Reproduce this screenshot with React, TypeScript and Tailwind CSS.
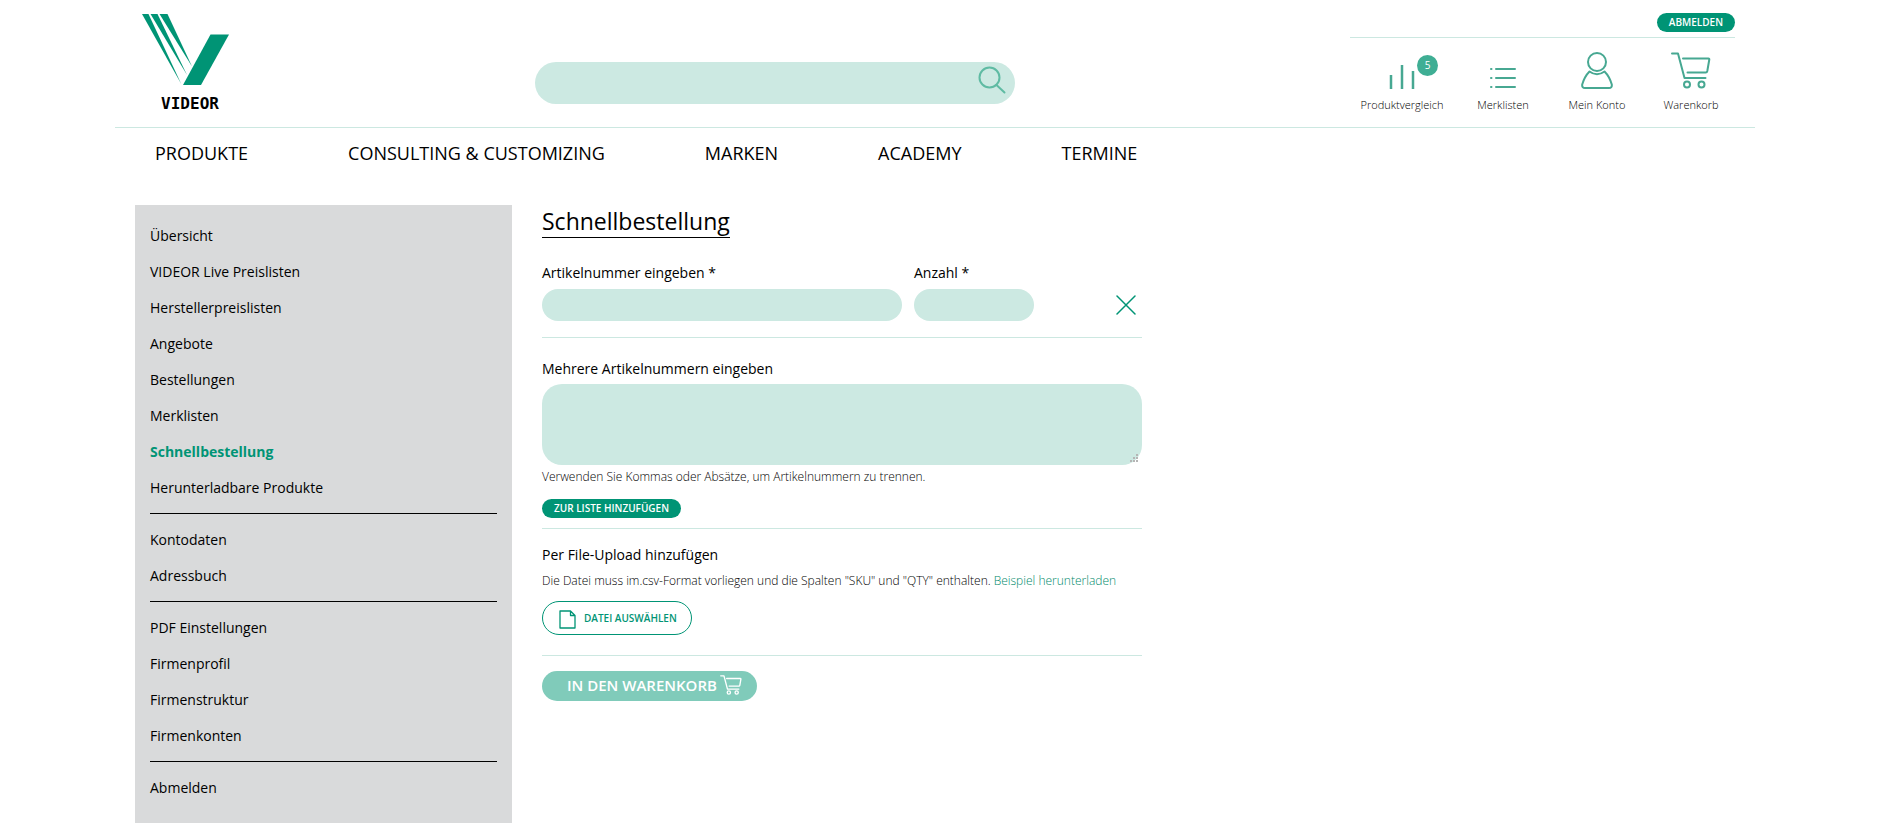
import React from 'react';

const navItems = ['PRODUKTE', 'CONSULTING & CUSTOMIZING', 'MARKEN', 'ACADEMY', 'TERMINE'];

const accountGroups = [
  [
    'Übersicht',
    'VIDEOR Live Preislisten',
    'Herstellerpreislisten',
    'Angebote',
    'Bestellungen',
    'Merklisten',
    'Schnellbestellung',
    'Herunterladbare Produkte',
  ],
  ['Kontodaten', 'Adressbuch'],
  ['PDF Einstellungen', 'Firmenprofil', 'Firmenstruktur', 'Firmenkonten'],
  ['Abmelden'],
];

function Logo() {
  return (
    <a href="#" aria-label="VIDEOR" className="flex flex-col items-center">
      <svg width="88" height="72" viewBox="0 0 88 72" fill="#009475">
        <path d="M0 0h6.500L39.500 70.500z" />
        <path d="M8.500 0h7L45 61z" />
        <path d="M17.500 0h8L50 52.500z" />
        <path d="M68.500 20.500H87L59 71H41z" />
      </svg>
      <span className="mt-2 pl-2 font-['DejaVu_Sans_Mono',monospace] text-base font-bold leading-5 text-black">VIDEOR</span>
    </a>
  );
}

function CartIcon({ className }: { className: string }) {
  return (
    <svg className={className} viewBox="0 0 40 37" fill="none" stroke="currentColor" strokeLinecap="round" strokeLinejoin="round">
      <path d="M1 1.500h6l6.500 24.500h21" />
      <path d="M12 6.500h25.500q1 0 .8 1l-2 11.500q-.3 1.500-1.500 1.500H16.500" />
      <circle cx="16" cy="32.500" r="3" />
      <circle cx="30.500" cy="32.500" r="3" />
    </svg>
  );
}

function CompareIcon() {
  return (
    <svg width="26" height="24" viewBox="0 0 26 24" fill="none" stroke="currentColor" strokeWidth="2.500">
      <path d="M2 10v14M13 0v24M24 6v18" />
    </svg>
  );
}

function ListIcon() {
  return (
    <svg width="26" height="21" viewBox="0 0 26 21" fill="none" stroke="currentColor" strokeWidth="2" strokeLinecap="round">
      <path d="M6 1h19M6 10h19M6 19h19M1 1h.5M1 10h.5M1 19h.5" />
    </svg>
  );
}

function UserIcon() {
  return (
    <svg width="32" height="37" viewBox="0 0 32 37" fill="none" stroke="currentColor" strokeWidth="2" strokeLinejoin="round">
      <circle cx="16" cy="10" r="9" />
      <path d="M8.500 19.500C5 23 2.500 28 1.200 32.500Q.8 36 4 36h24q3.200 0 2.800-3.500C29.500 28 27 23 23.500 19.500Q16 25 8.500 19.500z" />
    </svg>
  );
}

const shopLinks = [
  { name: 'Produktvergleich', icon: <CompareIcon />, badge: 5 },
  { name: 'Merklisten', icon: <ListIcon /> },
  { name: 'Mein Konto', icon: <UserIcon /> },
  { name: 'Warenkorb', icon: <CartIcon className="h-[37px] w-[40px] stroke-2" /> },
];

function Header() {
  return (
    <header className="flex h-32 items-start border-b border-[#cce8e1] px-5">
      <div className="w-[400px] shrink-0 pl-[7px] pt-[14px]">
        <div className="w-fit">
          <Logo />
        </div>
      </div>
      <form className="relative mt-[62px] w-[480px]">
        <input type="search" aria-label="Suche" className="block h-[42px] w-full rounded-full bg-[#cce9e2] pl-5 pr-12 outline-none" />
        <button type="button" aria-label="Suchen" className="absolute right-[9px] top-[4px] text-[#5fbba3]">
          <svg width="28" height="28" viewBox="0 0 28 28" fill="none" stroke="currentColor" strokeWidth="2" strokeLinecap="round">
            <circle cx="11.500" cy="11.500" r="10" />
            <path d="M18.500 19l8 7.500" />
          </svg>
        </button>
      </form>
      <div className="ml-auto w-[385px]">
        <div className="flex justify-end border-b border-[#cce8e1] pb-[5px] pt-[13px]">
          <button type="button" className="h-[19px] rounded-full bg-[#009475] px-3 pb-0.5 text-[10px] font-semibold leading-none text-white">
            ABMELDEN
          </button>
        </div>
        <div className="flex gap-3 pl-1">
          {shopLinks.map((link) => (
            <a key={link.name} href="#" className="flex h-[75px] w-[82px] flex-col items-center justify-end first:w-[96px]">
              <span className="relative text-[#47a892]">
                {link.icon}
                {link.badge && (
                  <span className="absolute -top-[10px] left-[28px] flex size-[21px] items-center justify-center rounded-full bg-[#3fae94] text-[10px] text-white">
                    {link.badge}
                  </span>
                )}
              </span>
              <span className="mt-2 text-[11px] font-light leading-4 text-black">{link.name}</span>
            </a>
          ))}
        </div>
      </div>
    </header>
  );
}

function Sidebar() {
  return (
    <aside className="w-[377px] shrink-0 bg-[#d9dadb] px-[15px] pb-[17px] pt-[13px]">
      {accountGroups.map((group, index) => (
        <ul key={index} className={index > 0 ? 'mt-[7px] border-t border-black pt-2' : ''}>
          {group.map((name) => (
            <li key={name}>
              <a
                href="#"
                className={`block text-sm leading-9 ${name === 'Schnellbestellung' ? 'font-bold text-[#009475]' : 'text-black'}`}
              >
                {name}
              </a>
            </li>
          ))}
        </ul>
      ))}
    </aside>
  );
}

function QuickOrder() {
  return (
    <main className="w-[600px] text-sm text-black">
      <h1 className="w-fit border-b border-black text-[23px] leading-8">Schnellbestellung</h1>

      <form>
        <div className="flex items-end border-b border-[#cce8e1] pb-4 pt-[25px]">
          <div>
            <label htmlFor="sku" className="block leading-5">Artikelnummer eingeben *</label>
            <input id="sku" className="mt-[6px] block h-8 w-[360px] rounded-full bg-[#cce9e2] px-4 outline-none" />
          </div>
          <div className="ml-3">
            <label htmlFor="qty" className="block leading-5">Anzahl *</label>
            <input id="qty" className="mt-[6px] block h-8 w-[120px] rounded-full bg-[#cce9e2] px-4 outline-none" />
          </div>
          <button type="button" aria-label="Entfernen" className="mb-[6px] ml-auto mr-[6px] text-[#009475]">
            <svg width="20" height="20" viewBox="0 0 20 20" stroke="currentColor" strokeWidth="1.500" strokeLinecap="round">
              <path d="M1 1l18 18M19 1L1 19" />
            </svg>
          </button>
        </div>

        <div className="border-b border-[#cce8e1] pb-[10px] pt-[21px]">
          <label htmlFor="skus" className="block leading-5">Mehrere Artikelnummern eingeben</label>
          <div className="relative mt-[5px]">
            <textarea id="skus" className="block h-[81px] w-full resize-none rounded-[20px] bg-[#cce9e2] px-4 py-2 outline-none" />
            <svg className="pointer-events-none absolute bottom-[3px] right-[4px]" width="8" height="8" viewBox="0 0 8 8" fill="#b5b5b5">
              <path d="M6 0h2v2H6zM3 3h2v2H3zM6 3h2v2H6zM0 6h2v2H0zM3 6h2v2H3zM6 6h2v2H6z" />
            </svg>
          </div>
          <p className="mt-[3px] text-xs font-light leading-[18px] text-black">
            Verwenden Sie Kommas oder Absätze, um Artikelnummern zu trennen.
          </p>
          <button type="button" className="mt-[13px] block h-[19px] rounded-full bg-[#009475] px-3 pb-0.5 text-[10px] font-semibold leading-none text-white">
            ZUR LISTE HINZUFÜGEN
          </button>
        </div>

        <div className="border-b border-[#cce8e1] pb-5 pt-4">
          <h2 className="leading-5">Per File-Upload hinzufügen</h2>
          <p className="mt-[7px] text-xs font-light leading-[18px] text-black">
            Die Datei muss im.csv-Format vorliegen und die Spalten "SKU" und "QTY" enthalten.{' '}
            <a href="#" className="text-[#008a6b]">Beispiel herunterladen</a>
          </p>
          <button type="button" className="mt-[11px] flex h-[34px] items-center gap-2 rounded-full border border-[#009475] pl-4 pr-[14px] text-[10px] font-semibold text-[#009475]">
            <svg className="mt-[2px]" width="17" height="19" viewBox="0 0 17 19" fill="none" stroke="currentColor" strokeWidth="1.300" strokeLinejoin="round">
              <path d="M1 1h10.500L16 5.500V18H1zM11.500 1v4.500H16" />
            </svg>
            DATEI AUSWÄHLEN
          </button>
        </div>

        <button type="button" className="mt-[15px] flex h-[30px] items-center gap-[3px] rounded-full bg-[#80cbba] pl-[25px] pr-[15px] text-[15px] font-semibold text-white">
          IN DEN WARENKORB
          <CartIcon className="mb-[3px] h-5 w-[22px] stroke-[2.5]" />
        </button>
      </form>
    </main>
  );
}

export default function App() {
  return (
    <div className="min-h-screen bg-white pr-[15px] font-['Open_Sans',sans-serif]">
      <div className="mx-auto max-w-[1640px]">
        <Header />
        <nav className="flex gap-[100px] px-10 pt-[11px] text-lg leading-7 text-black">
          {navItems.map((item) => (
            <a key={item} href="#">{item}</a>
          ))}
        </nav>
        <div className="mt-[38px] flex items-start gap-[30px] px-5">
          <Sidebar />
          <QuickOrder />
        </div>
      </div>
    </div>
  );
}
